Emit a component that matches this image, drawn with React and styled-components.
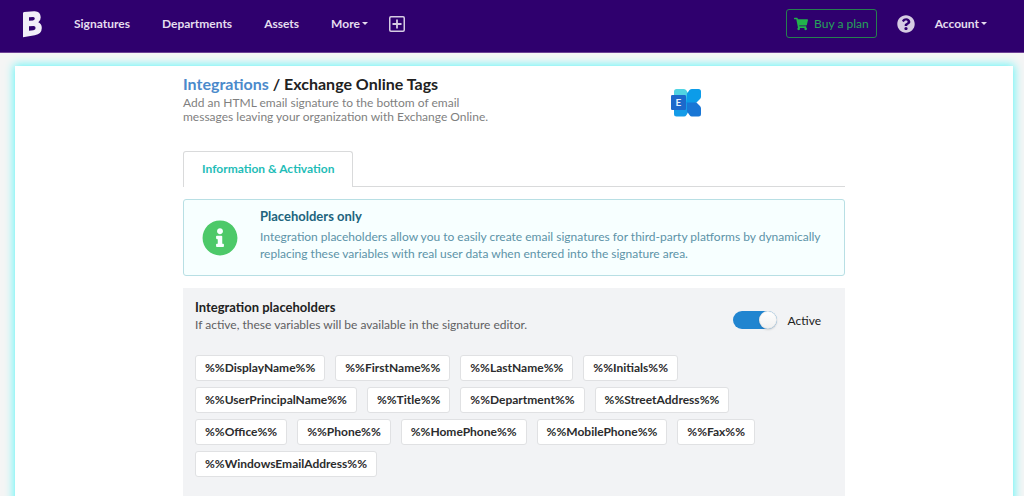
import React, { useState } from "react";
import styled, { createGlobalStyle } from "styled-components";
import { FaShoppingCart, FaQuestionCircle, FaInfoCircle } from "react-icons/fa";

const GlobalStyle = createGlobalStyle`
  *, *::before, *::after { box-sizing: border-box; }
  body {
    margin: 0;
    background: #f5f5f5;
    color: #212121;
    font-family: Lato, "Liberation Sans", sans-serif;
    font-size: 12px;
    line-height: 17px;
  }
  h1, h2, p, ul { margin: 0; padding: 0; }
  button { font: inherit; cursor: pointer; }
`;

const Page = styled.div`
  display: flex;
  flex-direction: column;
  min-height: 100vh;
`;

const TopBar = styled.header`
  display: flex;
  flex: none;
  align-items: center;
  justify-content: space-between;
  height: 53px;
  padding: 0 37px 5px 22px;
  background: #2f006e;
  border-bottom: 1px solid #6f4296;
`;

const Nav = styled.nav`
  display: flex;
  align-items: center;
`;

const NavGroup = styled.div`
  display: flex;
  align-items: center;
  gap: ${(p) => p.$gap};
`;

const LogoLink = styled.a`
  display: flex;
  margin-right: 31px;
`;

const NavLink = styled.a`
  color: #e4ddee;
  font-weight: 700;
  text-decoration: none;
`;

const MenuButton = styled.button`
  display: flex;
  align-items: center;
  gap: 2px;
  padding: 0;
  border: 0;
  background: none;
  color: #e4ddee;
  font-weight: 700;
`;

const Caret = styled.span`
  border: 3px solid transparent;
  border-top-color: currentColor;
  border-bottom: 0;
`;

const IconButton = styled.button`
  display: flex;
  padding: 0;
  border: 0;
  background: none;
  color: #d6cce3;
`;

const AddButton = styled(IconButton)`
  margin-left: 21px;
`;

const BuyButton = styled.button`
  display: flex;
  align-items: center;
  gap: 6px;
  height: 29px;
  padding: 0 7px;
  border: 1px solid #26804f;
  border-radius: 3px;
  background: none;
  color: #26a35a;
`;

const Panel = styled.main`
  flex: 1;
  margin: 13px 11px 0 15px;
  padding: 7px 16px 0;
  background: #fff;
  box-shadow: 0 0 9px 1px #5ff6f8;
`;

const Content = styled.div`
  max-width: 662px;
  margin: 0 auto;
`;

const Intro = styled.div`
  display: flex;
  justify-content: space-between;
  padding-right: 143px;
`;

const IntroText = styled.div`
  max-width: 320px;
`;

const Title = styled.h1`
  padding-bottom: 1px;
  font-size: 16px;
  line-height: 22px;
  font-weight: 700;
`;

const TitleLink = styled.a`
  color: #4b8acb;
  text-decoration: none;
`;

const Description = styled.p`
  color: #7f7f7f;
  line-height: 14px;
`;

const ProductLogo = styled.svg`
  flex: none;
  width: 32px;
  height: 32px;
  margin-top: 14px;
`;

const Tabs = styled.div`
  display: flex;
  margin-top: 27px;
  border-bottom: 1px solid #d9dadb;
`;

const Tab = styled.button`
  height: 36px;
  margin-bottom: -1px;
  padding: 0 18px 2px;
  border: 1px solid #d9dadb;
  border-bottom: 0;
  border-radius: 3px 3px 0 0;
  background: #fff;
  color: #1fbdb8;
  font-weight: 700;
`;

const Notice = styled.section`
  display: flex;
  align-items: center;
  gap: 22px;
  min-height: 77px;
  margin-top: 12px;
  padding: 0 16px 0 18px;
  border: 1px solid #b8dfe4;
  border-radius: 3px;
  background: #f7ffff;
  color: #5c93a8;
  svg { flex: none; color: #4dc969; }
`;

const NoticeTitle = styled.h2`
  padding-bottom: 3px;
  color: #21647d;
  font-size: 13px;
  line-height: 17px;
`;

const NoticeBody = styled.div`
  padding-bottom: 6px;
`;

const Placeholders = styled.section`
  margin-top: 12px;
  padding: 11px 12px 28px;
  background: #f2f3f5;
`;

const SectionHead = styled.div`
  display: flex;
  justify-content: space-between;
  align-items: center;
  padding-right: 12px;
`;

const SectionTitle = styled.h2`
  font-size: 13px;
  line-height: 17px;
`;

const SectionHint = styled.p`
  color: #5f6062;
`;

const ToggleLabel = styled.label`
  display: flex;
  align-items: center;
  gap: 11px;
  margin-top: 8px;
`;

const Toggle = styled.input`
  display: flex;
  justify-content: ${(p) => (p.checked ? "flex-end" : "flex-start")};
  appearance: none;
  width: 44px;
  height: 18px;
  margin: 0;
  border-radius: 9px;
  background: ${(p) => (p.checked ? "#2185d0" : "#cfd2d6")};
  &::before {
    content: "";
    width: 18px;
    height: 18px;
    border-radius: 50%;
    background: linear-gradient(#fff, #f0f0f0);
    box-shadow: 0 1px 2px rgba(0, 0, 0, 0.15), 0 0 0 1px rgba(0, 0, 0, 0.06) inset;
  }
`;

const TagList = styled.ul`
  display: flex;
  flex-wrap: wrap;
  gap: 6px 10px;
  margin-top: 22px;
  padding-right: 64px;
  list-style: none;
`;

const Tag = styled.li`
  padding: 4px 9px;
  border: 1px solid #e0e1e3;
  border-radius: 3px;
  background: #fff;
  color: #2b2c2d;
  font-weight: 700;
  line-height: 16px;
`;

const tags = [
  "DisplayName", "FirstName", "LastName", "Initials", "UserPrincipalName",
  "Title", "Department", "StreetAddress", "Office", "Phone", "HomePhone",
  "MobilePhone", "Fax", "WindowsEmailAddress",
];

function BrandLogo() {
  return (
    <svg width="21" height="28" viewBox="0 0 21 28" aria-hidden="true">
      <path
        fill="#f1eef8"
        fillRule="evenodd"
        d="M1 3.2Q1 2.2 2 2L12 1.2Q18.5 .8 18.7 7.2Q18.8 10.6 16.3 12.2Q19.8 13.6 19.8 18Q19.7 24.2 12.8 25.2L1 27.2ZM7 7.2V10.8L11 10.5Q12.8 10.3 12.8 8.6Q12.8 6.9 11 7ZM7 16.2V20.8L11.4 20.3Q13.6 20 13.6 18Q13.6 15.8 11.4 15.9Z"
      />
    </svg>
  );
}

function PlusSquare() {
  return (
    <svg width="16" height="16" viewBox="0 0 16 16" fill="none" stroke="currentColor" aria-hidden="true">
      <rect x=".75" y=".75" width="14.5" height="14.5" rx="1.2" strokeWidth="1.5" />
      <path d="M8 3.5v9M3.5 8h9" strokeWidth="1.8" />
    </svg>
  );
}

function ExchangeLogo() {
  return (
    <ProductLogo viewBox="0 0 32 32" role="img" aria-label="Exchange">
      <path fill="#50d4e3" d="M6.500 2H14q1.500 0 2.500 1.500L19 8v8H4V4.500Q4 2 6.500 2z" />
      <path fill="#149be8" d="M4 15h14.500v9.500L16.500 28q-1 1.500-2.500 1.500H6.500Q4 29.500 4 27z" />
      <path fill="#0c9ce9" d="M17 6.500L19.500 3q1-1 2.500-1h6.500Q31 2 31 4.500v5q0 1.500-1 2.500l-3.500 3.500L21 18l-5-2z" />
      <path fill="#1976d5" d="M17 15.500h9.500L30 19q1 1 1 2.500V27q0 2.500-2.500 2.500H22q-1.500 0-2.500-1.500L17 24.500z" />
      <rect x="1" y="8" width="15" height="15" rx="1.200" fill="#1c69cb" />
      <text x="8.500" y="19" fill="#e4f0ff" fontSize="10" fontWeight="700" textAnchor="middle">E</text>
    </ProductLogo>
  );
}

export default function App() {
  const [active, setActive] = useState(true);
  return (
    <Page>
      <GlobalStyle />
      <TopBar>
        <Nav>
          <LogoLink href="#" aria-label="Home"><BrandLogo /></LogoLink>
          <NavGroup $gap="32px">
            <NavLink href="#">Signatures</NavLink>
            <NavLink href="#">Departments</NavLink>
            <NavLink href="#">Assets</NavLink>
            <MenuButton>More<Caret /></MenuButton>
          </NavGroup>
          <AddButton aria-label="Add"><PlusSquare /></AddButton>
        </Nav>
        <NavGroup $gap="20px">
          <BuyButton><FaShoppingCart size={14} color="#22b14c" />Buy a plan</BuyButton>
          <IconButton aria-label="Help"><FaQuestionCircle size={18} /></IconButton>
          <MenuButton>Account<Caret /></MenuButton>
        </NavGroup>
      </TopBar>
      <Panel>
        <Content>
          <Intro>
            <IntroText>
              <Title><TitleLink href="#">Integrations</TitleLink> / Exchange Online Tags</Title>
              <Description>
                Add an HTML email signature to the bottom of email messages leaving your organization with Exchange Online.
              </Description>
            </IntroText>
            <ExchangeLogo />
          </Intro>
          <Tabs role="tablist">
            <Tab role="tab" aria-selected="true">Information &amp; Activation</Tab>
          </Tabs>
          <Notice>
            <FaInfoCircle size={36} />
            <NoticeBody>
              <NoticeTitle>Placeholders only</NoticeTitle>
              <p>
                Integration placeholders allow you to easily create email signatures for third-party platforms by dynamically replacing these variables with real user data when entered into the signature area.
              </p>
            </NoticeBody>
          </Notice>
          <Placeholders>
            <SectionHead>
              <div>
                <SectionTitle>Integration placeholders</SectionTitle>
                <SectionHint>If active, these variables will be available in the signature editor.</SectionHint>
              </div>
              <ToggleLabel>
                <Toggle type="checkbox" role="switch" checked={active} onChange={(e) => setActive(e.target.checked)} />
                Active
              </ToggleLabel>
            </SectionHead>
            <TagList>
              {tags.map((name) => <Tag key={name}>{`%%${name}%%`}</Tag>)}
            </TagList>
          </Placeholders>
        </Content>
      </Panel>
    </Page>
  );
}
